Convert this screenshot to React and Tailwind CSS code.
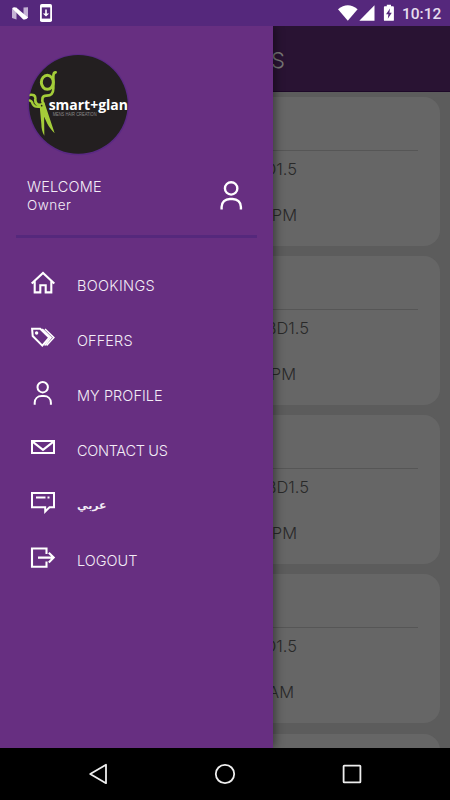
const bookings = [
  { price: 'BD1.5', priceClass: 'w-[287px]', time: '6:00 PM', timeClass: 'w-[287px]' },
  { price: 'BD1.5', priceClass: 'w-[299px]', time: '6:00 PM', timeClass: 'w-[286px]' },
  { price: 'BD1.5', priceClass: 'w-[299px]', time: '6:00 PM', timeClass: 'w-[287px]' },
  { price: 'BD1.5', priceClass: 'w-[287px]', time: '9:00 AM', timeClass: 'w-[284px]' },
  { price: '', priceClass: '', time: '', timeClass: '' },
]

const menu = [
  { label: 'BOOKINGS', icon: HomeIcon, labelClass: 'text-[14.5px] tracking-[0.3px]' },
  { label: 'OFFERS', icon: TagsIcon, labelClass: 'text-[14.5px] tracking-[0.1px]' },
  { label: 'MY PROFILE', icon: UserIcon, labelClass: 'text-[14.5px] tracking-[0.05px]' },
  { label: 'CONTACT US', icon: MailIcon, labelClass: 'text-[14.5px] tracking-[-0.3px]' },
  { label: 'عربي', icon: ChatIcon, labelClass: 'font-["DejaVu_Sans",sans-serif] text-[11px] font-bold' },
  { label: 'LOGOUT', icon: LogoutIcon, labelClass: 'text-[14.5px]' },
]

function HomeIcon() {
  return (
    <svg width="26" height="26" viewBox="0 0 26 26" fill="none" stroke="white" strokeWidth="2.1">
      <path d="M1.7 12.4 13 1.9l11.3 10.5M4.7 10v11.4h5.6v-7.2h5.4v7.2h5.6V10" />
    </svg>
  )
}

function TagsIcon() {
  return (
    <svg width="26" height="26" viewBox="0 0 26 26" fill="none" stroke="white" strokeWidth="2">
      <path d="M2.1 2.7h8.1l9 8.9-6.9 8L2.7 10z" />
      <path d="M12.2 3l8.9 8.6-6.5 7.8M15 3l8.9 8.6-7.3 8" strokeWidth="1.5" />
      <circle cx="6.6" cy="7" r="1.7" fill="white" stroke="none" />
    </svg>
  )
}

function UserIcon({ size = 26 }) {
  return (
    <svg width={size} height={size} viewBox="0 0 26 26" fill="none" stroke="white" strokeWidth="2">
      <circle cx="12.7" cy="6.2" r="5.2" />
      <path d="M4.7 23.8v-2c0-4 3-6.7 7-6.7h2.2c4 0 7 2.7 7 6.7v2" />
    </svg>
  )
}

function MailIcon() {
  return (
    <svg width="26" height="26" viewBox="0 0 26 26" fill="none" stroke="white" strokeWidth="2">
      <path d="M2 5.1h22v12H2zM2.5 5.6 13 13.9l10.5-8.3" />
    </svg>
  )
}

function ChatIcon() {
  return (
    <svg width="26" height="26" viewBox="0 0 26 26" fill="none" stroke="white" strokeWidth="2">
      <path d="M2 2h22v14.2h-4.5l-4.3 4.4v-4.4H2z" />
      <path d="M6 6.5h9.5M17.5 6.5h2" />
    </svg>
  )
}

function LogoutIcon() {
  return (
    <svg width="26" height="26" viewBox="0 0 26 26" fill="none" stroke="white" strokeWidth="2.1">
      <path d="M16.5 8V2.5H2v18.2h14.5v-5.3M8 11.6h15M18.8 6.8l4.9 4.8-4.9 4.8" />
    </svg>
  )
}

function StatusBar() {
  return (
    <div className="flex h-[26px] shrink-0 items-center bg-[#55287c] pr-[9px] pl-3">
      <svg width="17" height="13" viewBox="0 0 17 13">
        <path d="M0 2.2 4.5.5v12L0 11zM11.5.5 16 .2v10.6l-4.5 1.6z" fill="#c4b2d4" />
        <path d="M0 1.2Q2-.4 4.5.8L16 10.6q-2 2.6-5 1.6z" fill="white" />
      </svg>
      <svg className="ml-[11px]" width="12" height="18" viewBox="0 0 12 18">
        <rect width="12" height="18" rx="1.8" fill="white" />
        <path d="M1.8 3.4h8.4v11.2H1.8z" fill="#55287c" />
        <path d="M5.2 5.4h1.6v4h2.4L6 12.6 2.8 9.4h2.4z" fill="white" />
      </svg>
      <div className="flex-1" />
      <svg className="mr-[-8.5px]" width="73" height="18" viewBox="0 0 73 18" fill="white">
        <path d="M0 5.2Q9.8-2.6 19.6 5.2L9.8 16.8z" />
        <path d="M36.5 1.3v15.5H21.3z" />
        <path d="M46.8 2.3h2V.8h4.2v1.5h2a.9.9 0 0 1 .9.9v12.7a.9.9 0 0 1-.9.9h-8.2a.9.9 0 0 1-.9-.9V3.2a.9.9 0 0 1 .9-.9z" />
        <path d="m52 4.5-4 5.7h2.4l-.6 4.6 4-6h-2.4z" fill="#55287c" />
      </svg>
      <span className="w-[39px] pt-[3px] font-[Roboto,sans-serif] text-[15.5px] leading-none font-medium whitespace-nowrap text-[#e6dcee]">10:12</span>
    </div>
  )
}

function BookingCard({ booking }) {
  return (
    <div className="h-[148.7px] shrink-0 rounded-[16px] bg-[#666]">
      <div className="mx-[22px] h-[53.5px] border-b border-[#565656]" />
      <p className={`mt-[6px] text-right text-[16.5px] leading-6 ${booking.priceClass}`}>{booking.price}</p>
      <p className={`mt-[22px] text-right text-[16.5px] leading-6 ${booking.timeClass}`}>{booking.time}</p>
    </div>
  )
}

function Logo() {
  return (
    <svg className="h-[120px] w-[130px]" viewBox="0 0 390 360">
      <defs>
        <clipPath id="disc"><circle cx="190" cy="178" r="149" /></clipPath>
      </defs>
      <circle cx="190" cy="179" r="152" fill="#5a2983" />
      <circle cx="190" cy="178" r="148" fill="#231f20" />
      <g clipPath="url(#disc)">
        {/* scissors */}
        <g fill="none" stroke="#a4cd39" strokeLinecap="round">
          <ellipse cx="97" cy="112" rx="18" ry="21" strokeWidth="9" />
          <path d="M122 82q-7 0-7 12v36c0 18-8 22-20 22-14 0-16 10-10 26" strokeWidth="8" />
          <path d="M42 150q20-4 19 11-2 17 15 20" strokeWidth="8" />
          <path d="M42 166q9 0 11 11 5 11 24 8" strokeWidth="7" />
        </g>
        <path d="M70 177l18-5 31 93q-16-17-22-29zM74 184h13l1 88q-9-14-9-36z" fill="#a4cd39" />
        <circle cx="80" cy="182" r="2.5" fill="#231f20" />
        <text x="101" y="194" textLength="238" lengthAdjust="spacingAndGlyphs" fill="white" fontFamily="Open Sans, sans-serif" fontSize="45" fontWeight="700">smart+glan</text>
        <text x="113" y="213" textLength="132" lengthAdjust="spacingAndGlyphs" fill="#8b898a" fontFamily="Liberation Sans, sans-serif" fontSize="16">MENS HAIR CREATION</text>
      </g>
    </svg>
  )
}

function Drawer() {
  return (
    <aside className="absolute inset-y-0 left-0 w-[273.3px] bg-[#672f81] text-[#f3edf6] shadow-[2px_0_9px_rgba(0,0,0,0.45)]">
      <div className="pt-[19px] pl-[15px]">
        <Logo />
      </div>
      <div className="flex h-[70px] justify-between pt-[12px] pr-[26px] pl-[27px]">
        <div>
          <p className="text-[14.5px] leading-[19px] tracking-[0.15px]">WELCOME</p>
          <p className="text-[13.5px] leading-[19px] tracking-[0.5px]">Owner</p>
        </div>
        <div className="pt-[4px]">
          <UserIcon size={31} />
        </div>
      </div>
      <div className="mr-4 ml-4 h-[3px] bg-[#55287c]" />
      <nav className="pt-[18px]">
        {menu.map(item => (
          <div key={item.label} className="flex h-[55px] items-center pl-[30px]">
            <item.icon />
            <span className={`mt-[4px] ml-[21px] leading-5 ${item.labelClass}`}>{item.label}</span>
          </div>
        ))}
      </nav>
    </aside>
  )
}

function NavBar() {
  return (
    <div className="flex h-[52px] shrink-0 items-center justify-between bg-black pr-[88px] pl-[88px]">
      <svg width="20" height="22" viewBox="0 0 20 22" fill="none" stroke="#eee" strokeWidth="1.8" strokeLinejoin="round">
        <path d="M18 1.8v18.4L2.2 11z" />
      </svg>
      <svg width="22" height="22" viewBox="0 0 22 22" fill="none" stroke="#eee" strokeWidth="1.8">
        <circle cx="11" cy="11" r="9.2" />
      </svg>
      <svg width="20" height="20" viewBox="0 0 20 20" fill="none" stroke="#eee" strokeWidth="1.8">
        <rect x="1.6" y="1.6" width="16.8" height="16.8" rx="0.6" />
      </svg>
    </div>
  )
}

export default function App() {
  return (
    <div className="flex h-[800px] w-[450px] flex-col overflow-hidden font-[Inter,sans-serif] font-light">
      <StatusBar />
      <div className="relative flex min-h-0 flex-1 flex-col overflow-hidden bg-[#5c5c5c] text-[#292929]">
        <header className="h-[66px] shrink-0 border-b border-[#1d0828] bg-[#291333]">
          <h1 className="w-[285px] pt-[19px] text-right text-[22px] leading-[30px] text-[#777]">BOOKINGS</h1>
        </header>
        <div className="flex flex-col gap-[10.4px] px-[10px] pt-[5.2px]">
          {bookings.map((booking, i) => (
            <BookingCard key={i} booking={booking} />
          ))}
        </div>
        <Drawer />
      </div>
      <NavBar />
    </div>
  )
}
